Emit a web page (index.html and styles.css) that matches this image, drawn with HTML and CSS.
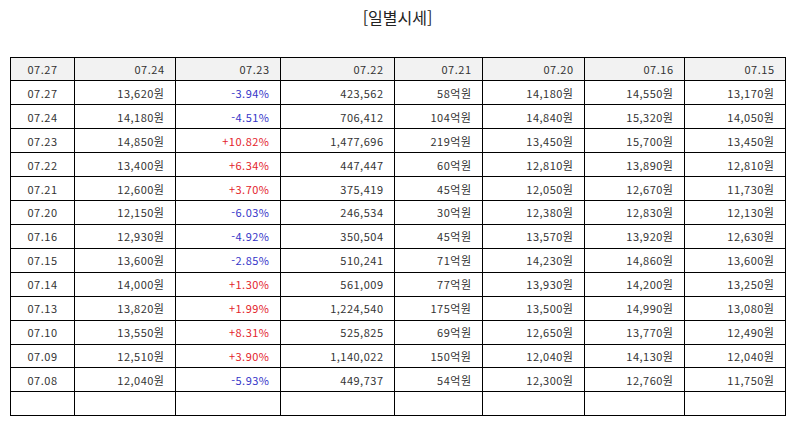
FILE: index.html
```html
<!DOCTYPE html>
<html lang="ko">
<head>
<meta charset="utf-8">
<title>일별시세</title>
<link rel="stylesheet" href="styles.css">
</head>
<body>
<div class="title">[일별시세]</div>
<table class="quotes">
  <colgroup>
    <col class="c1"><col class="c2"><col class="c3"><col class="c4"><col class="c5"><col class="c6"><col class="c7"><col class="c8">
  </colgroup>
  <thead>
    <tr><th>07.27</th><th>07.24</th><th>07.23</th><th>07.22</th><th>07.21</th><th>07.20</th><th>07.16</th><th>07.15</th></tr>
  </thead>
  <tbody>
    <tr><td>07.27</td><td>13,620원</td><td class="dn">-3.94%</td><td>423,562</td><td>58억원</td><td>14,180원</td><td>14,550원</td><td>13,170원</td></tr>
    <tr><td>07.24</td><td>14,180원</td><td class="dn">-4.51%</td><td>706,412</td><td>104억원</td><td>14,840원</td><td>15,320원</td><td>14,050원</td></tr>
    <tr><td>07.23</td><td>14,850원</td><td class="up">+10.82%</td><td>1,477,696</td><td>219억원</td><td>13,450원</td><td>15,700원</td><td>13,450원</td></tr>
    <tr><td>07.22</td><td>13,400원</td><td class="up">+6.34%</td><td>447,447</td><td>60억원</td><td>12,810원</td><td>13,890원</td><td>12,810원</td></tr>
    <tr><td>07.21</td><td>12,600원</td><td class="up">+3.70%</td><td>375,419</td><td>45억원</td><td>12,050원</td><td>12,670원</td><td>11,730원</td></tr>
    <tr><td>07.20</td><td>12,150원</td><td class="dn">-6.03%</td><td>246,534</td><td>30억원</td><td>12,380원</td><td>12,830원</td><td>12,130원</td></tr>
    <tr><td>07.16</td><td>12,930원</td><td class="dn">-4.92%</td><td>350,504</td><td>45억원</td><td>13,570원</td><td>13,920원</td><td>12,630원</td></tr>
    <tr><td>07.15</td><td>13,600원</td><td class="dn">-2.85%</td><td>510,241</td><td>71억원</td><td>14,230원</td><td>14,860원</td><td>13,600원</td></tr>
    <tr><td>07.14</td><td>14,000원</td><td class="up">+1.30%</td><td>561,009</td><td>77억원</td><td>13,930원</td><td>14,200원</td><td>13,250원</td></tr>
    <tr><td>07.13</td><td>13,820원</td><td class="up">+1.99%</td><td>1,224,540</td><td>175억원</td><td>13,500원</td><td>14,990원</td><td>13,080원</td></tr>
    <tr><td>07.10</td><td>13,550원</td><td class="up">+8.31%</td><td>525,825</td><td>69억원</td><td>12,650원</td><td>13,770원</td><td>12,490원</td></tr>
    <tr><td>07.09</td><td>12,510원</td><td class="up">+3.90%</td><td>1,140,022</td><td>150억원</td><td>12,040원</td><td>14,130원</td><td>12,040원</td></tr>
    <tr><td>07.08</td><td>12,040원</td><td class="dn">-5.93%</td><td>449,737</td><td>54억원</td><td>12,300원</td><td>12,760원</td><td>11,750원</td></tr>
    <tr><td></td><td></td><td></td><td></td><td></td><td></td><td></td><td></td></tr>
  </tbody>
</table>
</body>
</html>
```
FILE: styles.css
```css
html, body {
  margin: 0;
  padding: 0;
  background: #ffffff;
}
body {
  font-family: "Noto Sans CJK KR", "Noto Sans", sans-serif;
  color: #333333;
}
.title {
  height: 56.5px;
  padding-top: 7px;
  box-sizing: border-box;
  text-align: center;
  font-size: 16px;
  line-height: 20px;
  color: #222222;
}
.quotes {
  margin-left: 10px;
  width: 776px;
  table-layout: fixed;
  border-collapse: collapse;
  font-size: 11px;
  letter-spacing: 0.5px;
}
.quotes .c1 { width: 64px; }
.quotes .c2 { width: 101px; }
.quotes .c3 { width: 105px; }
.quotes .c4 { width: 114px; }
.quotes .c5 { width: 88px; }
.quotes .c6 { width: 102px; }
.quotes .c7 { width: 100px; }
.quotes .c8 { width: 101px; }
.quotes th,
.quotes td {
  border: 1px solid #000000;
  height: 22.93px;
  padding: 0 10.5px 0 4px;
  text-align: right;
  font-weight: normal;
  line-height: 14px;
  white-space: nowrap;
}
.quotes th:first-child,
.quotes td:first-child {
  text-align: center;
  padding: 0;
}
.quotes thead th {
  background: #f2f2f2;
}
.quotes .up { color: #e3242b; }
.quotes .dn { color: #3535c8; }
```
